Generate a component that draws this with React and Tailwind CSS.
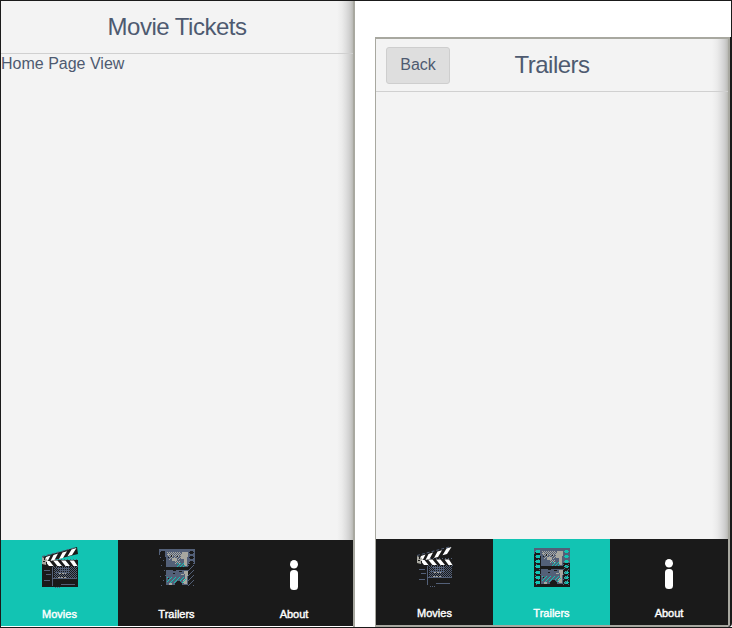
import React from 'react';

// Small dotted texture used by the icon artwork.
function Dots({ x, y, w, h, fill, gap = 2 }) {
  const dots = [];
  for (let j = 0; j < h; j++) {
    for (let i = (j * (gap - 1)) % gap; i < w; i += gap) {
      dots.push(<rect key={`${i}-${j}`} x={x + i} y={y + j} width="1" height="1" fill={fill} />);
    }
  }
  return <g>{dots}</g>;
}

function ClapperIcon() {
  return (
    <svg width="36" height="41" viewBox="0 0 36 41">
      <path d="M0 10 35 0l1 7L12 13h24v27H0z" fill="#1a1a1a" />
      <path d="M0 9.500 34 .5" stroke="#536078" strokeDasharray="3 2" fill="none" />
      <path d="M10 12.500h26M11 19.500h25" stroke="#536078" strokeDasharray="1 2" fill="none" />
      <g fill="#fff">
        <path d="M4 10 8.500 8.500 6 13.500 2 15zM11.500 8l4.500-1.500-3.500 6.500-4 1zM20.500 5.500l4.500-1.300-4 6.800-4 1zM29.500 2.500 34.500 1 30 8l-4.500 1.300z" />
        <path d="M3 14h4.500l4 5H7zM11 13.500h4.500l4.500 5.500h-4.500zM19 13.500h4.500l4.500 5.500h-4.500zM27.500 13.500H32l3.500 5.500h-4z" />
      </g>
      <path d="M0 10 5 12 4 18 0 17z" fill="#a8a8a0" />
      <path d="M2 11h1v2H2zM1 14h2v1H1zM4 15h1v2H4z" fill="#1a1a1a" />
      <Dots x={12} y={20} w={23} h={11} fill="#536078" />
      <path d="M15 21.500h13M17 23.500h11M14 25.500h13M10.500 20v19M2 23.500h6M4 27.500h5M2 33.500h6M11 31.500h24M19 37.500h14" stroke="#536078" fill="none" />
      <path d="M17 26.500h7M16 30.500h8" stroke="#a8a8a0" strokeDasharray="2 1" />
      <path d="M13 40.500h5" stroke="#536078" strokeDasharray="1 1" />
    </svg>
  );
}

function FilmIcon({ active }) {
  const holes = [2, 7, 12, 17, 23, 28, 33];
  const hole = active ? '#12c4b3' : '#1a1a1a';
  return (
    <svg width="36" height="39" viewBox="0 0 36 39" shapeRendering="crispEdges">
      <path d="M0 0h36v39H0z" fill="#1a1a1a" />
      <path d="M0 0h36v3H0zM0 3h1v3H0zM6 3h1v5H6zM29 3h7v12h-7z" fill="#536078" />
      <path d="M7 1h22v17H7zM7 21h22v15H7z" fill="#536078" />
      <path d="M23 3h6v5h-1v9h-3v-7h-3V5h1zM13 9h5v3h-5zM9 4h1v3H9zM25 22h4v5h-1v8h-3v-5h1v-5h-1zM22 25h3v1h-3zM10 34h3v2h-3zM24 31h2v3h-2z" fill="#a8a8a0" />
      <Dots x={8} y={3} w={14} h={4} fill="#a8a8a0" />
      <Dots x={10} y={7} w={12} h={4} fill="#a8a8a0" gap={3} />
      <Dots x={16} y={12} w={5} h={3} fill="#a8a8a0" />
      <path d="M9 8h1v1H9zM12 6h1v2h-1zM18 7h1v1h-1zM14 21h3v1h-3zM14 24h2v1h-2zM20 22h3v1h-3zM9 29h1v1H9z" fill="#1a1a1a" />
      <Dots x={18} y={14} w={8} h={4} fill="#12c4b3" gap={3} />
      <Dots x={8} y={28} w={19} h={6} fill="#12c4b3" gap={4} />
      <path d="M16 36v-2h1v-1h1v-1h3v1h1v1h1v2z" fill="#1a1a1a" />
      {holes.map((y) => (
        <g key={y} fill={hole}>
          <path d={`M2 ${y}h4v3H2zM1 ${y + 1}h5v1H1z`} />
          <path d={`M31 ${y}h3v3h-3zM30 ${y + 1}h5v1h-5z`} />
        </g>
      ))}
      <g fill="#536078">
        <path d="M1 8h1v1H1zM4 11h1v1H4zM2 16h1v1H2zM5 21h1v1H5zM1 27h1v1H1zM4 31h1v1H4zM2 36h1v1H2zM6 26h1v1H6z" />
      </g>
      <Dots x={29} y={16} w={6} h={21} fill="#536078" gap={5} />
    </svg>
  );
}

function InfoIcon() {
  return (
    <svg width="8" height="30" viewBox="0 0 8 30" fill="#fff">
      <ellipse cx="4" cy="4.300" rx="4" ry="4.300" />
      <rect y="10" width="8" height="20" rx="3.500" />
    </svg>
  );
}

function Tab({ label, active, width, children, iconPad }) {
  return (
    <div className={`flex h-[86px] flex-col items-center ${width} ${active ? 'bg-[#12c4b3]' : 'bg-[#1a1a1a]'}`}>
      <div className={`h-[66px] ${iconPad}`}>{children}</div>
      <span className="text-[11px] leading-[16px] text-white [-webkit-text-stroke:0.4px_white]">{label}</span>
    </div>
  );
}

function TabBar({ active }) {
  return (
    <nav className="flex h-[86px] w-full bg-[#1a1a1a]">
      <Tab label="Movies" active={active === 'movies'} width="w-[117px]" iconPad="pt-[7px]"><ClapperIcon /></Tab>
      <Tab label="Trailers" active={active === 'trailers'} width="w-[117px]" iconPad="pt-[9px]"><FilmIcon active={active === 'trailers'} /></Tab>
      <Tab label="About" width="w-[118px]" iconPad="pt-[20px]"><InfoIcon /></Tab>
    </nav>
  );
}

const edgeShade = 'bg-[linear-gradient(to_left,#b8b8b4_0px,#c8c8c6_2px,#d2d2d2_4px,#dedede_7px,#ebebeb_11px,#f3f3f3_16px)]';

export default function App() {
  return (
    <div className="flex h-[628px] w-[732px] border-y border-[#1a1a1a] bg-white font-['Liberation_Sans',Arial,sans-serif] text-[#4e5a70]">
      <section className="flex h-[626px] w-[355px] flex-col border-r-2 border-l border-r-[#a8a8a0] border-l-[#1a1a1a]">
        <div className={`h-[539px] shrink-0 ${edgeShade}`}>
          <header className="flex h-[53px] items-center justify-center border-b border-[#d0d0d0] text-[24px] leading-none tracking-[-0.5px]">Movie Tickets</header>
          <p className="text-[16px] leading-[19px]">Home Page View</p>
        </div>
        <TabBar active="movies" />
      </section>

      <div className="flex h-[626px] w-[377px] flex-col">
        <div className="h-9 shrink-0 border-r border-[#1a1a1a]" />
        <section className="mr-[2px] ml-5 flex h-[590px] flex-col rounded-br border-t-2 border-r-2 border-b-2 border-l border-[#a8a8a0] shadow-[2px_0_0_#1a1a1a]">
          <div className={`h-[500px] shrink-0 ${edgeShade}`}>
            <header className="grid h-[53px] grid-cols-[1fr_auto_1fr] items-center border-b border-[#d0d0d0] px-[10px]">
              <button className="h-[37px] w-16 rounded-[3px] border border-[#cecece] bg-[#dedede] text-[16px] leading-none">Back</button>
              <h1 className="text-[24px] leading-none tracking-[-0.5px]">Trailers</h1>
            </header>
          </div>
          <TabBar active="trailers" />
        </section>
      </div>
    </div>
  );
}
